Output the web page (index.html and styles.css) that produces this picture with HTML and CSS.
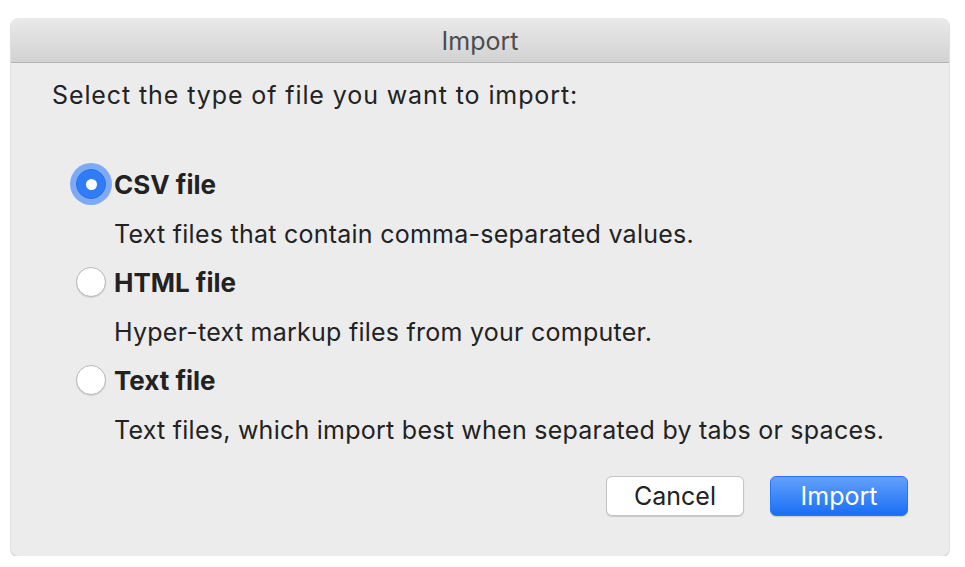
FILE: index.html
```html
<!DOCTYPE html>
<html lang="en">
<head>
    <meta charset="UTF-8">
    <title>Import</title>
<link rel="stylesheet" href="styles.css">
</head>
<body>
    <div class="window">
        <div class="titlebar">Import</div>

        <div class="content">
            <p class="prompt">Select the type of file you want to import:</p>

            <div class="options">
                <label class="option">
                    <span class="radio checked"><span class="dot"></span></span>
                    <span class="name">CSV file</span>
                </label>
                <p class="desc">Text files that contain comma-separated values.</p>

                <label class="option">
                    <span class="radio"></span>
                    <span class="name">HTML file</span>
                </label>
                <p class="desc">Hyper-text markup files from your computer.</p>

                <label class="option">
                    <span class="radio"></span>
                    <span class="name">Text file</span>
                </label>
                <p class="desc">Text files, which import best when separated by tabs or spaces.</p>
            </div>

            <div class="buttons">
                <button class="btn">Cancel</button>
                <button class="btn primary">Import</button>
            </div>
        </div>
    </div>
</body>
</html>
```

FILE: styles.css
```css
body {
    margin: 0;
    background: #ffffff;
    font-family: Inter, "Noto Sans", sans-serif;
    color: #222;
}

/* Window */
.window {
    margin: 19px 0 0 11px;
    width: 938px;
    height: 537px;
    background: #ececec;
    border-radius: 7px;
    box-shadow: 0 0 0 1px rgba(0, 0, 0, 0.08), 0 1px 2px rgba(0, 0, 0, 0.15);
    display: flex;
    flex-direction: column;
}

.titlebar {
    height: 43px;
    border-bottom: 1px solid #b3b3b3;
    border-radius: 7px 7px 0 0;
    background: linear-gradient(#e9e9e9, #d2d2d2);
    display: flex;
    align-items: center;
    justify-content: center;
    font-size: 25px;
    color: #4d4d4d;
}

/* Body */
.content {
    flex: 1;
    padding: 0 41px;
    display: flex;
    flex-direction: column;
}

.prompt {
    margin: 16px 0 0 0;
    font-size: 25px;
    line-height: 32px;
    letter-spacing: 0.9px;
}

.options {
    margin-top: 53px;
    padding-left: 24px;
}

.option {
    display: flex;
    align-items: center;
    height: 40px;
}

.name {
    font-size: 26px;
    font-weight: 700;
    margin-left: 8px;
}

.desc {
    margin: 14px 0 12px 38px;
    font-size: 25px;
    line-height: 32px;
    letter-spacing: 0.25px;
}

.radio {
    width: 28px;
    height: 28px;
    border-radius: 50%;
    background: #fff;
    border: 1px solid #b8b8b8;
    box-shadow: 0 1px 1px rgba(0, 0, 0, 0.12);
    display: flex;
    align-items: center;
    justify-content: center;
}

.radio.checked {
    background: #2f7cf6;
    border-color: #2a6fe0;
    box-shadow: 0 0 0 6px rgba(98, 154, 246, 0.8);
}

.radio .dot {
    width: 11px;
    height: 11px;
    border-radius: 50%;
    background: #fff;
}

/* Buttons */
.buttons {
    margin-top: auto;
    margin-bottom: 40px;
    display: flex;
    justify-content: flex-end;
    gap: 26px;
}

.btn {
    width: 138px;
    height: 40px;
    border-radius: 6px;
    border: 1px solid #c4c4c4;
    background: #fff;
    font-family: Inter, "Noto Sans", sans-serif;
    font-size: 25px;
    color: #222;
    box-shadow: 0 1px 1px rgba(0, 0, 0, 0.15);
}

.btn.primary {
    border-color: #2a75f0;
    background: linear-gradient(#62a1fa, #1a6ef6);
    color: #fff;
}
```
